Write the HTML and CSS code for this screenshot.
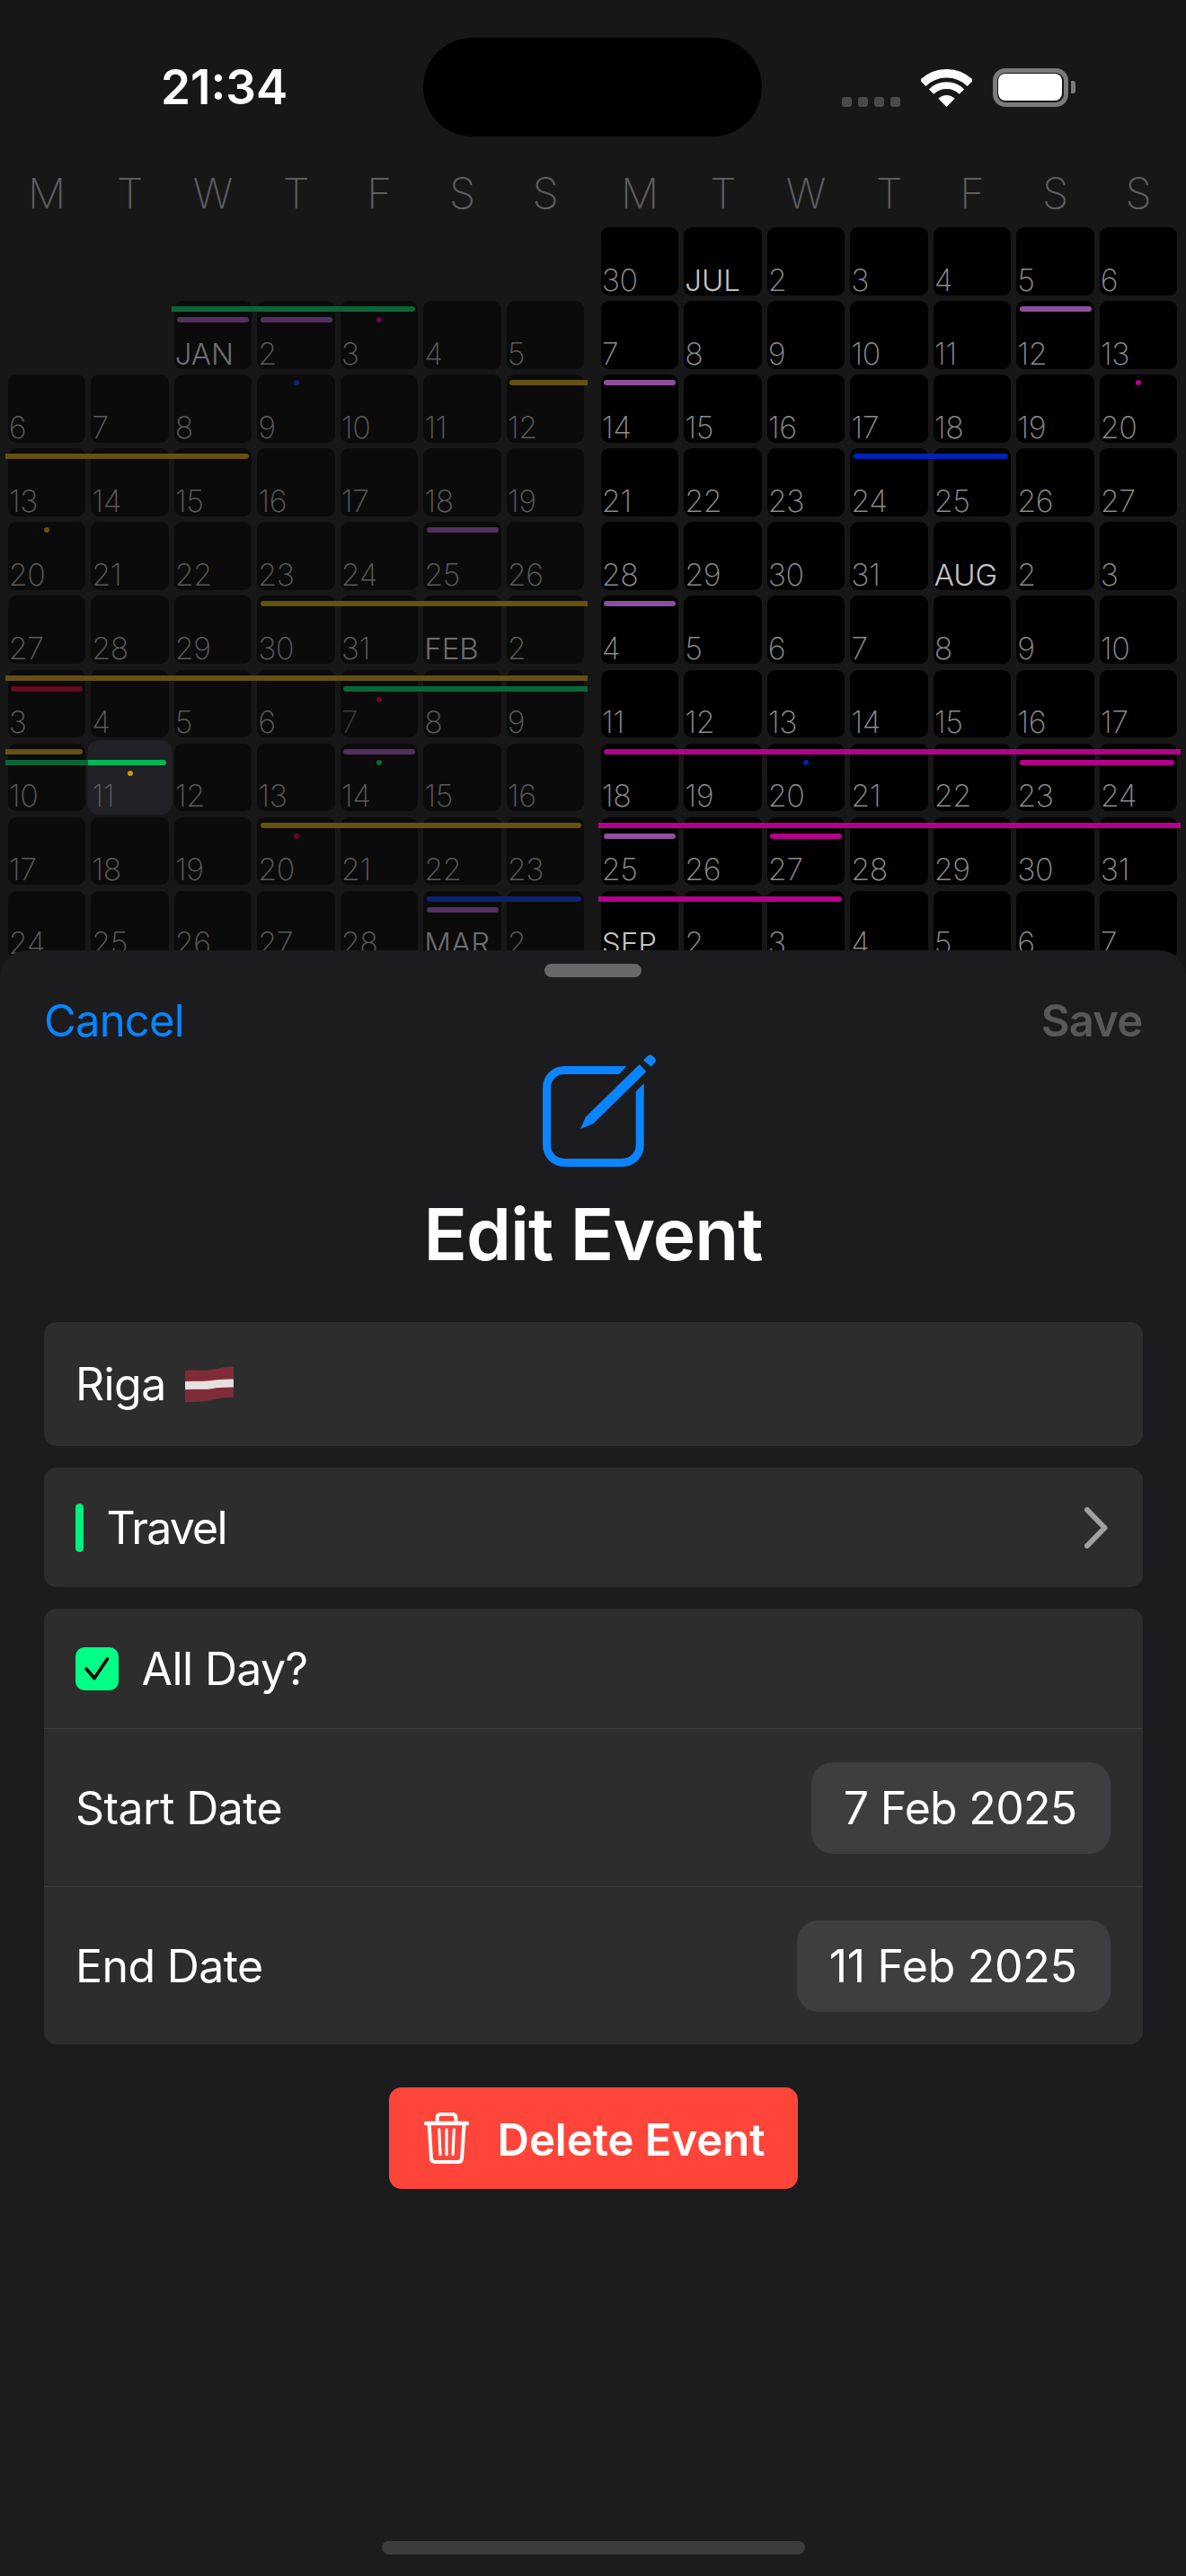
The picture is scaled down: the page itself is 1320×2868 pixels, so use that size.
FILE: index.html
```html
<!DOCTYPE html>
<html lang="en">
<head>
<meta charset="utf-8">
<title>Edit Event</title>
<link rel="stylesheet" href="styles.css">
</head>
<body>
<div class="screen">
  <header class="status">
    <div class="status-left"><span class="time">21:34</span></div>
    <div class="island"></div>
    <div class="status-right">
      <div class="signal"><span></span><span></span><span></span><span></span></div>
      <svg class="wifi" viewBox="0 0 57 42"><path d="M2.1 15.6A37.4 37.4 0 0 1 54.9 15.6" fill="none" stroke="#fff" stroke-width="9.4"/><path d="M11.6 25.1A23.9 23.9 0 0 1 45.4 25.1" fill="none" stroke="#fff" stroke-width="7.7"/><path d="M28.5 42L19.3 32.8A13 13 0 0 1 37.7 32.8Z" fill="#fff"/></svg>
      <div class="battery"><div class="battery-fill"></div></div>
      <div class="battery-nub"></div>
    </div>
  </header>

  <main class="calendar">
    <section class="month past">
      <div class="weekdays"><span>M</span><span>T</span><span>W</span><span>T</span><span>F</span><span>S</span><span>S</span></div>
      <div class="grid">
        <div></div><div></div><div></div><div></div><div></div><div></div><div></div>
        <div></div><div></div>
        <div class="cell"><span class="bar t0 fs w2 p-green"></span><span class="bar t1 p-purple"></span><span class="num mon">JAN</span></div>
        <div class="cell"><span class="bar t1 p-purple"></span><span class="num">2</span></div>
        <div class="cell"><span class="dot t1 p-magenta"></span><span class="num">3</span></div>
        <div class="cell"><span class="num">4</span></div>
        <div class="cell"><span class="num">5</span></div>

        <div class="cell"><span class="num">6</span></div>
        <div class="cell"><span class="num">7</span></div>
        <div class="cell"><span class="num">8</span></div>
        <div class="cell"><span class="dot t0 p-blue"></span><span class="num">9</span></div>
        <div class="cell"><span class="num">10</span></div>
        <div class="cell"><span class="num">11</span></div>
        <div class="cell"><span class="bar t0 fe p-yellow"></span><span class="num">12</span></div>

        <div class="cell"><span class="bar t0 fs w2 p-yellow"></span><span class="num">13</span></div>
        <div class="cell"><span class="num">14</span></div>
        <div class="cell"><span class="num">15</span></div>
        <div class="cell"><span class="num">16</span></div>
        <div class="cell"><span class="num">17</span></div>
        <div class="cell"><span class="num">18</span></div>
        <div class="cell"><span class="num">19</span></div>

        <div class="cell"><span class="dot t0 p-yellow"></span><span class="num">20</span></div>
        <div class="cell"><span class="num">21</span></div>
        <div class="cell"><span class="num">22</span></div>
        <div class="cell"><span class="num">23</span></div>
        <div class="cell"><span class="num">24</span></div>
        <div class="cell"><span class="bar t0 p-purple"></span><span class="num">25</span></div>
        <div class="cell"><span class="num">26</span></div>

        <div class="cell"><span class="num">27</span></div>
        <div class="cell"><span class="num">28</span></div>
        <div class="cell"><span class="num">29</span></div>
        <div class="cell"><span class="bar t0 fe w3 p-yellow"></span><span class="num">30</span></div>
        <div class="cell"><span class="num">31</span></div>
        <div class="cell"><span class="num mon">FEB</span></div>
        <div class="cell"><span class="num">2</span></div>

        <div class="cell"><span class="bar t0 fs fe w6 p-yellow"></span><span class="bar t1 p-red"></span><span class="num">3</span></div>
        <div class="cell"><span class="num">4</span></div>
        <div class="cell"><span class="num">5</span></div>
        <div class="cell"><span class="num">6</span></div>
        <div class="cell"><span class="bar t1 fe w2 p-green"></span><span class="dot t2 p-red"></span><span class="num dim">7</span></div>
        <div class="cell"><span class="num">8</span></div>
        <div class="cell"><span class="num">9</span></div>

        <div class="cell"><span class="bar t0 fs p-yellow"></span><span class="bar t1 fs fe p-green"></span><span class="num">10</span></div>
        <div class="cell today"><span class="bar t1 fs p-bright"></span><span class="dot t2 p-gold"></span><span class="num">11</span></div>
        <div class="cell"><span class="num">12</span></div>
        <div class="cell"><span class="num">13</span></div>
        <div class="cell"><span class="bar t0 p-purple"></span><span class="dot t1 p-green"></span><span class="num">14</span></div>
        <div class="cell"><span class="num">15</span></div>
        <div class="cell"><span class="num">16</span></div>

        <div class="cell"><span class="num">17</span></div>
        <div class="cell"><span class="num">18</span></div>
        <div class="cell"><span class="num">19</span></div>
        <div class="cell"><span class="bar t0 w3 p-yellow"></span><span class="dot t1 p-red"></span><span class="num">20</span></div>
        <div class="cell"><span class="num">21</span></div>
        <div class="cell"><span class="num">22</span></div>
        <div class="cell"><span class="num">23</span></div>

        <div class="cell"><span class="num">24</span></div>
        <div class="cell"><span class="num">25</span></div>
        <div class="cell"><span class="num">26</span></div>
        <div class="cell"><span class="num">27</span></div>
        <div class="cell"><span class="num">28</span></div>
        <div class="cell"><span class="bar t0 w1 p-blue"></span><span class="bar t1 p-purple"></span><span class="num mon">MAR</span></div>
        <div class="cell"><span class="num">2</span></div>
      </div>
    </section>

    <section class="month future">
      <div class="weekdays"><span>M</span><span>T</span><span>W</span><span>T</span><span>F</span><span>S</span><span>S</span></div>
      <div class="grid">
        <div class="cell"><span class="num">30</span></div>
        <div class="cell"><span class="num mon">JUL</span></div>
        <div class="cell"><span class="num">2</span></div>
        <div class="cell"><span class="num">3</span></div>
        <div class="cell"><span class="num">4</span></div>
        <div class="cell"><span class="num">5</span></div>
        <div class="cell"><span class="num">6</span></div>

        <div class="cell"><span class="num">7</span></div>
        <div class="cell"><span class="num">8</span></div>
        <div class="cell"><span class="num">9</span></div>
        <div class="cell"><span class="num">10</span></div>
        <div class="cell"><span class="num">11</span></div>
        <div class="cell"><span class="bar t0 f-purple"></span><span class="num">12</span></div>
        <div class="cell"><span class="num">13</span></div>

        <div class="cell"><span class="bar t0 f-purple"></span><span class="num">14</span></div>
        <div class="cell"><span class="num">15</span></div>
        <div class="cell"><span class="num">16</span></div>
        <div class="cell"><span class="num">17</span></div>
        <div class="cell"><span class="num">18</span></div>
        <div class="cell"><span class="num">19</span></div>
        <div class="cell"><span class="dot t0 f-magenta"></span><span class="num">20</span></div>

        <div class="cell"><span class="num">21</span></div>
        <div class="cell"><span class="num">22</span></div>
        <div class="cell"><span class="num">23</span></div>
        <div class="cell"><span class="bar t0 w1 f-blue"></span><span class="num">24</span></div>
        <div class="cell"><span class="num">25</span></div>
        <div class="cell"><span class="num">26</span></div>
        <div class="cell"><span class="num">27</span></div>

        <div class="cell"><span class="num">28</span></div>
        <div class="cell"><span class="num">29</span></div>
        <div class="cell"><span class="num">30</span></div>
        <div class="cell"><span class="num">31</span></div>
        <div class="cell"><span class="num mon">AUG</span></div>
        <div class="cell"><span class="num">2</span></div>
        <div class="cell"><span class="num">3</span></div>

        <div class="cell"><span class="bar t0 f-purple"></span><span class="num">4</span></div>
        <div class="cell"><span class="num">5</span></div>
        <div class="cell"><span class="num">6</span></div>
        <div class="cell"><span class="num">7</span></div>
        <div class="cell"><span class="num">8</span></div>
        <div class="cell"><span class="num">9</span></div>
        <div class="cell"><span class="num">10</span></div>

        <div class="cell"><span class="num">11</span></div>
        <div class="cell"><span class="num">12</span></div>
        <div class="cell"><span class="num">13</span></div>
        <div class="cell"><span class="num">14</span></div>
        <div class="cell"><span class="num">15</span></div>
        <div class="cell"><span class="num">16</span></div>
        <div class="cell"><span class="num">17</span></div>

        <div class="cell"><span class="bar t0 fe w6 f-magenta"></span><span class="num">18</span></div>
        <div class="cell"><span class="num">19</span></div>
        <div class="cell"><span class="dot t1 f-blue"></span><span class="num">20</span></div>
        <div class="cell"><span class="num">21</span></div>
        <div class="cell"><span class="num">22</span></div>
        <div class="cell"><span class="bar t1 w1 f-magenta"></span><span class="num">23</span></div>
        <div class="cell"><span class="num">24</span></div>

        <div class="cell"><span class="bar t0 fs fe w6 f-magenta"></span><span class="bar t1 f-purple"></span><span class="num">25</span></div>
        <div class="cell"><span class="num">26</span></div>
        <div class="cell"><span class="bar t1 f-magenta"></span><span class="num">27</span></div>
        <div class="cell"><span class="num">28</span></div>
        <div class="cell"><span class="num">29</span></div>
        <div class="cell"><span class="num">30</span></div>
        <div class="cell"><span class="num">31</span></div>

        <div class="cell"><span class="bar t0 fs w2 f-magenta"></span><span class="num mon">SEP</span></div>
        <div class="cell"><span class="num">2</span></div>
        <div class="cell"><span class="num">3</span></div>
        <div class="cell"><span class="num">4</span></div>
        <div class="cell"><span class="num">5</span></div>
        <div class="cell"><span class="num">6</span></div>
        <div class="cell"><span class="num">7</span></div>
      </div>
    </section>
  </main>

  <aside class="sheet">
    <div class="grabber"></div>
    <nav class="sheet-nav"><span class="cancel">Cancel</span><span class="save">Save</span></nav>
    <svg class="edit-icon" viewBox="0 -13 130 126"><path fill="#0a84ff" d="M93.3 0H24A24 24 0 0 0 0 24V88A24 24 0 0 0 24 112H88.7A24 24 0 0 0 112.7 88V19.3L103.7 28.3V88A15 15 0 0 1 88.7 103H24A15 15 0 0 1 9 88V24A15 15 0 0 1 24 9H85Z"/><path fill="#0a84ff" d="M42 70L47.7 56.7L107.7 -2L115.3 6L56 64.3Z"/><path fill="#0a84ff" d="M112 -6.7L117.2 -11.8Q119.5 -13.6 121.8 -11.8L124.8 -9Q127 -6.6 124.9 -4.2L120.8 .7Z"/></svg>
    <h1 class="title">Edit Event</h1>

    <div class="card row-name">
      <span class="label">Riga</span>
      <svg class="flag" viewBox="0 0 54 40" role="img" aria-label="Flag of Latvia"><path fill="#7f2c38" d="M0 5C10 3 20 6 30 4S46 0 54 1V35C46 34 38 36 28 38S10 40 0 40Z"/><path fill="none" stroke="#e6e0e1" stroke-width="9" d="M0 21.500C12 21 22 22 30 20.500S46 19 54 19"/></svg>
    </div>

    <div class="card row-cat">
      <span class="cat-mark"></span>
      <span class="label">Travel</span>
      <svg class="chevron" viewBox="0 0 26 46"><path d="M3 3L22.500 23L3 43" fill="none" stroke="#a0a0a0" stroke-width="6" stroke-linecap="round" stroke-linejoin="round"/></svg>
    </div>

    <div class="card group">
      <div class="row row-allday">
        <span class="check"><svg viewBox="0 0 48 48"><path d="M12 24L21 34.500L35.500 13" fill="none" stroke="#000" stroke-width="3.600" stroke-linecap="round" stroke-linejoin="round"/></svg></span>
        <span class="label">All Day?</span>
      </div>
      <div class="row row-date">
        <span class="label">Start Date</span>
        <span class="pill">7 Feb 2025</span>
      </div>
      <div class="row row-date">
        <span class="label">End Date</span>
        <span class="pill pill-end">11 Feb 2025</span>
      </div>
    </div>

    <div class="delete">
      <svg class="trash" viewBox="0 0 50 57" fill="none" stroke="#fff" stroke-linecap="round"><path stroke-width="4.500" d="M2 12H48"/><path stroke-width="4" d="M14.600 9V6Q14.600 1.800 19 1.800H31Q35.400 1.800 35.400 6V9"/><path stroke-width="4" d="M5.700 14L8 51Q8.300 55 12.500 55H37.500Q41.700 55 42 51L44.500 14"/><path stroke-width="3.200" d="M16.700 19L18 46.700M25 19V46.700M33.300 19L32 46.700"/></svg>
      <span class="delete-text">Delete Event</span>
    </div>

    <div class="home-indicator"></div>
  </aside>
</div>
</body>
</html>
```

FILE: styles.css
```css
* { box-sizing: border-box; }
html, body { margin: 0; padding: 0; background: #171717; }
body { font-family: Inter, "Liberation Sans", sans-serif; color: #fff; }

.screen { position: relative; width: 1320px; height: 2868px; overflow: hidden; background: #171717; }

/* status bar */
.status { display: flex; align-items: center; height: 186px; padding-top: 42px; padding-bottom: 34px; }
.status-left { width: 471.4px; padding-left: 179px; }
.time { font-size: 53px; font-weight: 600; line-height: 60px; }
.island { width: 376.6px; height: 110px; border-radius: 55px; background: #000; }
.status-right { display: flex; align-items: flex-end; height: 43px; margin-left: 89px; }
.signal { display: flex; gap: 7px; margin-right: 23px; }
.signal span { width: 11px; height: 11px; border-radius: 3px; background: #4a4a4a; }
.wifi { width: 57px; height: 42px; margin-right: 23px; }
.battery { width: 84px; height: 43px; padding: 1.500px; border: 5px solid #7a7a7a; border-radius: 14px; }
.battery-fill { width: 100%; height: 100%; border-radius: 8px; background: #fff; }
.battery-nub { width: 5px; height: 14px; margin: 0 0 15px 3.500px; border-radius: 0 3px 3px 0; background: #7a7a7a; }

/* calendar */
.calendar { display: flex; width: 1320px; opacity: .999; }
.month { flex: 0 0 660px; width: 660px; padding-left: 8.800px; }
.weekdays { display: grid; grid-template-columns: repeat(7, 86.700px); column-gap: 5.800px; height: 58px; margin-bottom: 9px; }
.weekdays span { font-size: 47px; font-weight: 250; line-height: 58px; text-align: center; color: #5e5e60; }
.grid { display: grid; grid-template-columns: repeat(7, 86.700px); grid-auto-rows: 75.500px; gap: 6.600px 5.800px; }
.cell { position: relative; display: flex; align-items: flex-end; border-radius: 9px; }
.past .cell { background: #0b0b0b; }
.future .cell { background: #000; }
.num { font-size: 34px; font-weight: 250; line-height: 34px; padding: 0 0 0 1px; letter-spacing: -.5px; }
.past .num { color: #5a5a5a; }
.future .num { color: #8c8c8c; }
.past .num.mon { color: #6e6e6e; font-weight: 300; letter-spacing: 0; font-size: 33px; }
.future .num.mon { color: #c4c4c4; font-weight: 300; letter-spacing: 0; font-size: 33px; }
.past .num.dim { color: #3c3c3c; }
.past .cell.today { background: #212126; box-shadow: 0 0 0 4px #212126; }

.bar { position: absolute; z-index: 2; height: 6px; --span: 0; left: 3.400px; right: calc(3px - var(--span) * 92.500px); border-radius: 3px; }
.fs { left: -2.900px; border-top-left-radius: 0; border-bottom-left-radius: 0; }
.fe { right: calc(-3.500px - var(--span) * 92.500px); border-top-right-radius: 0; border-bottom-right-radius: 0; }
.w1 { --span: 1; }
.w2 { --span: 2; }
.w3 { --span: 3; }
.w6 { --span: 6; }
.dot { position: absolute; z-index: 2; left: 50%; width: 6px; height: 6px; margin-left: -3px; border-radius: 50%; }
.t0 { top: 6px; }
.t1 { top: 18px; }
.t2 { top: 30px; }

.p-green { background: #0a6638; }
.p-purple { background: #52305f; }
.p-yellow { background: #665012; }
.p-red { background: #660a20; }
.p-blue { background: #0c2272; }
.p-magenta { background: #6e0058; }
.p-bright { background: #00b857; }
.p-gold { background: #c8960c; }
.f-purple { background: #8f4f9f; }
.f-magenta { background: #b5008c; }
.f-blue { background: #0022b8; }

/* sheet */
.sheet { position: absolute; z-index: 5; left: 0; right: 0; top: 1058px; bottom: 0; padding: 0 48.500px; border-radius: 30px 30px 0 0; background: #1c1c1e; }
.grabber { width: 108px; height: 15px; margin: 15px auto 0; border-radius: 7.500px; background: #68686b; }
.sheet-nav { display: flex; justify-content: space-between; height: 62px; margin-top: 18px; font-size: 49px; line-height: 62px; }
.cancel { color: #0a84ff; font-weight: 400; margin-left: .5px; letter-spacing: -.8px; }
.save { color: #58585b; font-weight: 600; letter-spacing: -.8px; }
.edit-icon { display: block; width: 130px; height: 126px; margin: 6px 0 0 555.500px; }
.title { margin: 23.500px 0 0; font-size: 80px; font-weight: 600; line-height: 100px; text-align: center; letter-spacing: -.9px; }

.card { border-radius: 14px; background: #2d2d2e; }
.label { font-size: 50px; line-height: 60px; letter-spacing: -.6px; }
.row-name { display: flex; align-items: center; height: 138px; margin-top: 48.500px; padding-left: 35.500px; }
.flag { width: 54px; height: 40px; margin-left: 21px; }
.row-cat { display: flex; align-items: center; height: 133px; margin-top: 24px; padding: 0 39px 0 35.500px; }
.cat-mark { width: 9px; height: 54px; margin-right: 25.500px; border-radius: 4.500px; background: #00f07c; }
.row-cat .label { flex: 1; letter-spacing: -1.800px; }
.chevron { width: 26px; height: 46px; }
.group { margin-top: 24px; }
.row { display: flex; align-items: center; }
.row-allday { height: 133px; padding-left: 35.500px; }
.check { width: 48px; height: 48px; margin-right: 25.500px; border-radius: 10px; background: #00ff85; }
.check svg { display: block; width: 48px; height: 48px; }
.row-date { justify-content: space-between; height: 176px; padding: 0 36px 0 35.500px; border-top: 1px solid #3e3e40; }
.pill { height: 102px; padding: 0 37px 0 36px; border-radius: 24px; background: #3e3e41; font-size: 50px; line-height: 102px; letter-spacing: -.7px; }
.pill-end { letter-spacing: -.3px; }
.delete { display: flex; align-items: center; width: 455px; height: 113px; margin: 48px auto 0; padding-left: 39.500px; border-radius: 14px; background: #ff453a; }
.trash { width: 50px; height: 57px; margin-right: 31.500px; }
.delete-text { padding-top: 5px; font-size: 49px; font-weight: 600; line-height: 60px; }
.home-indicator { position: absolute; left: 425px; top: 1771px; width: 471px; height: 15px; border-radius: 7.500px; background: #3c3c3c; }
```
